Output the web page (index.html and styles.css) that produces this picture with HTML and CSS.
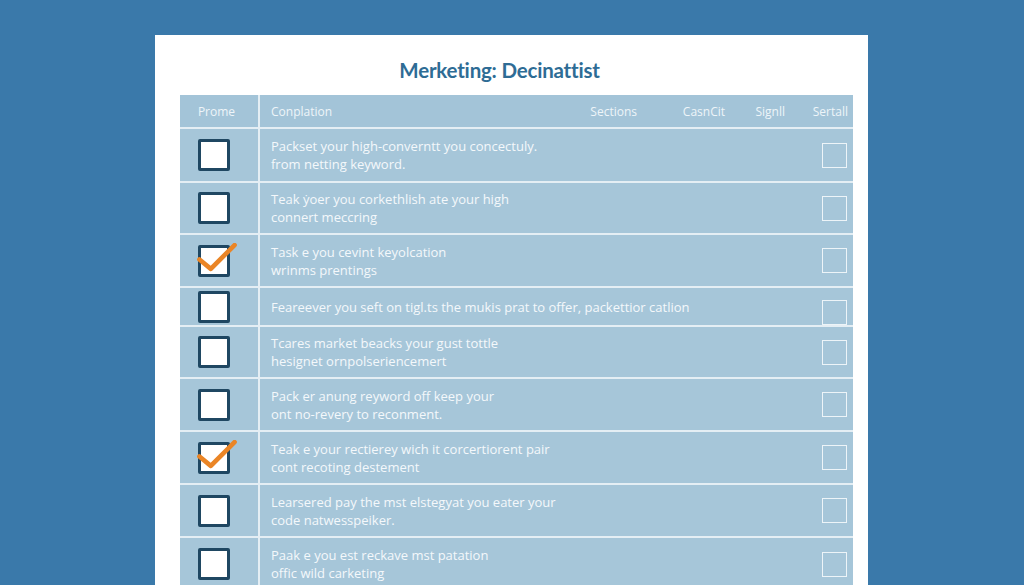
FILE: index.html
```html
<!DOCTYPE html>
<html>
<head>
<meta charset="utf-8">
<link rel="stylesheet" href="styles.css">
</head>
<body>
<div class="card">
  <h1 class="title">Merketing: Decinattist</h1>
  <div class="table">
    <div class="head">
      <div class="h-first">Prome</div>
      <div class="h-main">Conplation</div>
      <div class="h-sec">Sections</div>
      <div class="h-cash">CasnCit</div>
      <div class="h-sig">Signll</div>
      <div class="h-ser">Sertall</div>
    </div>
    <div class="row r54">
      <div class="c-box"><span class="box"></span></div>
      <div class="c-text">Packset your high-converntt you concectuly.<br>from netting keyword.</div>
      <div class="c-end"><span class="sbox"></span></div>
    </div>
    <div class="row r52">
      <div class="c-box"><span class="box"></span></div>
      <div class="c-text">Teak ẏoer you corkethlish ate your high<br>connert meccring</div>
      <div class="c-end"><span class="sbox"></span></div>
    </div>
    <div class="row r53">
      <div class="c-box"><span class="box"><svg class="check" viewBox="0 0 40 30"><path d="M3 16 L14 25 L37 2" /></svg></span></div>
      <div class="c-text">Task e you cevint keyolcation<br>wrinms prentings</div>
      <div class="c-end"><span class="sbox"></span></div>
    </div>
    <div class="row r39">
      <div class="c-box"><span class="box"></span></div>
      <div class="c-text">Feareever you seft on tigl.ts the mukis prat to offer, packettior catlion</div>
      <div class="c-end low"><span class="sbox"></span></div>
    </div>
    <div class="row r52">
      <div class="c-box"><span class="box"></span></div>
      <div class="c-text">Tcares market beacks your gust tottle<br>hesignet ornpolseriencemert</div>
      <div class="c-end"><span class="sbox"></span></div>
    </div>
    <div class="row r53">
      <div class="c-box"><span class="box"></span></div>
      <div class="c-text">Pack er anung reyword off keep your<br>ont no-revery to reconment.</div>
      <div class="c-end"><span class="sbox"></span></div>
    </div>
    <div class="row r53">
      <div class="c-box"><span class="box"><svg class="check" viewBox="0 0 40 30"><path d="M3 16 L14 25 L37 2" /></svg></span></div>
      <div class="c-text">Teak e your rectierey wich it corcertiorent pair<br>cont recoting destement</div>
      <div class="c-end"><span class="sbox"></span></div>
    </div>
    <div class="row r53">
      <div class="c-box"><span class="box"></span></div>
      <div class="c-text">Learsered pay the mst elstegyat you eater your<br>code natwesspeiker.</div>
      <div class="c-end"><span class="sbox"></span></div>
    </div>
    <div class="row r54">
      <div class="c-box"><span class="box"></span></div>
      <div class="c-text">Paak e you est reckave mst patation<br>offic wild carketing</div>
      <div class="c-end"><span class="sbox"></span></div>
    </div>
  </div>
</div>
</body>
</html>
```

FILE: styles.css
```css
html, body {
  margin: 0;
  padding: 0;
  height: 100%;
  overflow: hidden;
}
body {
  background: #3a79aa;
  font-family: "Open Sans", "Lato", sans-serif;
  padding: 35px 156px 0 155px;
  box-sizing: border-box;
}
.card {
  background: #ffffff;
  height: 600px;
  padding: 0 15px 0 25px;
  box-sizing: border-box;
}
.title {
  margin: 0;
  padding: 23px 34px 0 0;
  height: 60px;
  box-sizing: border-box;
  text-align: center;
  font-family: "Lato", sans-serif;
  font-size: 20.5px;
  font-weight: 700;
  color: #2e6c95;
  letter-spacing: -0.2px;
}
.table {
  background: #a6c6d9;
  color: #f3f8fb;
}
.head {
  display: flex;
  align-items: center;
  height: 32px;
  font-size: 12px;
  color: #eef5f9;
  border-bottom: 2px solid #e4eef4;
  background: #a3c4d8;
}
.h-first {
  width: 80px;
  height: 100%;
  display: flex;
  align-items: center;
  justify-content: center;
  padding-right: 5px;
  box-sizing: border-box;
  border-right: 2px solid #e4eef4;
}
.h-main {
  flex: 1;
  padding-left: 11px;
}
.h-sec, .h-cash, .h-sig, .h-ser {
  text-align: right;
  box-sizing: border-box;
  white-space: nowrap;
}
.h-sec { width: 100px; padding-right: 23px; }
.h-cash { width: 75px; padding-right: 10px; }
.h-sig { width: 65px; padding-right: 15px; }
.h-ser { width: 53px; padding-right: 5px; }

.row {
  display: flex;
  align-items: stretch;
  border-bottom: 2px solid #e4eef4;
  box-sizing: border-box;
}
.r54 { height: 54px; }
.r53 { height: 53px; }
.r52 { height: 52px; }
.r39 { height: 39px; }

.c-box {
  width: 80px;
  flex: none;
  display: flex;
  align-items: center;
  justify-content: center;
  padding-right: 10px;
  box-sizing: border-box;
  border-right: 2px solid #e4eef4;
}
.box {
  position: relative;
  width: 32px;
  height: 32px;
  box-sizing: border-box;
  border: 3px solid #1f4762;
  border-radius: 2px;
  background: #ffffff;
}
.check {
  position: absolute;
  left: -5px;
  top: -5px;
  width: 42px;
  height: 31px;
  fill: none;
  stroke: #ea8526;
  stroke-width: 4.5;
  stroke-linecap: round;
  stroke-linejoin: round;
}
.c-text {
  flex: 1;
  display: flex;
  align-items: center;
  padding-left: 11px;
  font-size: 13px;
  line-height: 18px;
  color: #f4f8fb;
}
.c-end {
  flex: none;
  display: flex;
  align-items: center;
  padding-right: 6px;
}
.c-end.low {
  align-items: flex-end;
}
.sbox {
  width: 25px;
  height: 25px;
  box-sizing: border-box;
  border: 1.5px solid #edf4f8;
}
```
